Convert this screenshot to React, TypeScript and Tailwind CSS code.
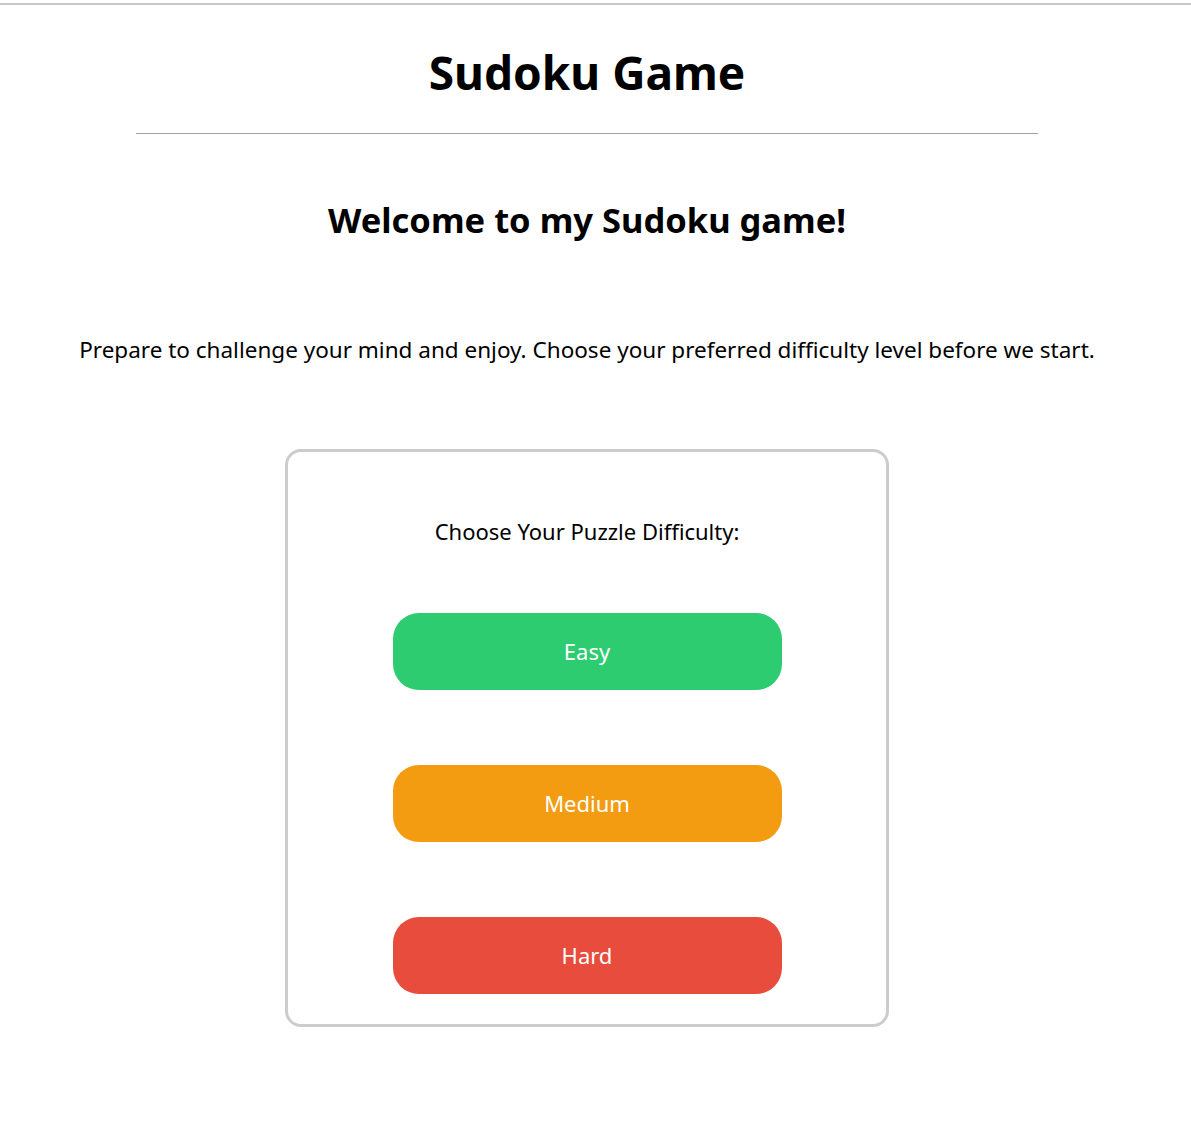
const font = { fontFamily: '"Noto Sans", "Open Sans", sans-serif' };

function DifficultyButton({ label, color }: { label: string; color: string }) {
  return (
    <button
      className={`flex h-[77px] w-[389px] items-center justify-center rounded-[26px] text-[22px] text-white ${color}`}
    >
      {label}
    </button>
  );
}

export default function App() {
  return (
    <div className="min-h-[1134px] w-[1191px] bg-white text-black" style={font}>
      <div className="h-[3px]" />
      <div className="h-[2px] w-full bg-[#c8c8c8]" />
      <div className="flex w-[1174px] flex-col items-center">
        <h1 className="mt-[39px] text-[46px] font-bold leading-[56px]">Sudoku Game</h1>
        <div className="mt-[33px] h-px w-[902px] bg-[#a0a0a0]" />
        <h2 className="mt-[63px] text-[34.5px] font-bold leading-[46px]">Welcome to my Sudoku game!</h2>
        <p className="mt-[92px] text-[22.5px] leading-[30px]">
          Prepare to challenge your mind and enjoy. Choose your preferred difficulty level before we start.
        </p>
        <div className="mt-[84px] flex w-[604px] flex-col items-center rounded-[16px] border-[3px] border-[#cccccc] pb-[30px] pt-[64px]">
          <p className="text-[22px] leading-[30px]">Choose Your Puzzle Difficulty:</p>
          <div className="mt-[67px] flex flex-col gap-[75px]">
            <DifficultyButton label="Easy" color="bg-[#2ecc71]" />
            <DifficultyButton label="Medium" color="bg-[#f39c12]" />
            <DifficultyButton label="Hard" color="bg-[#e74c3c]" />
          </div>
        </div>
      </div>
    </div>
  );
}
